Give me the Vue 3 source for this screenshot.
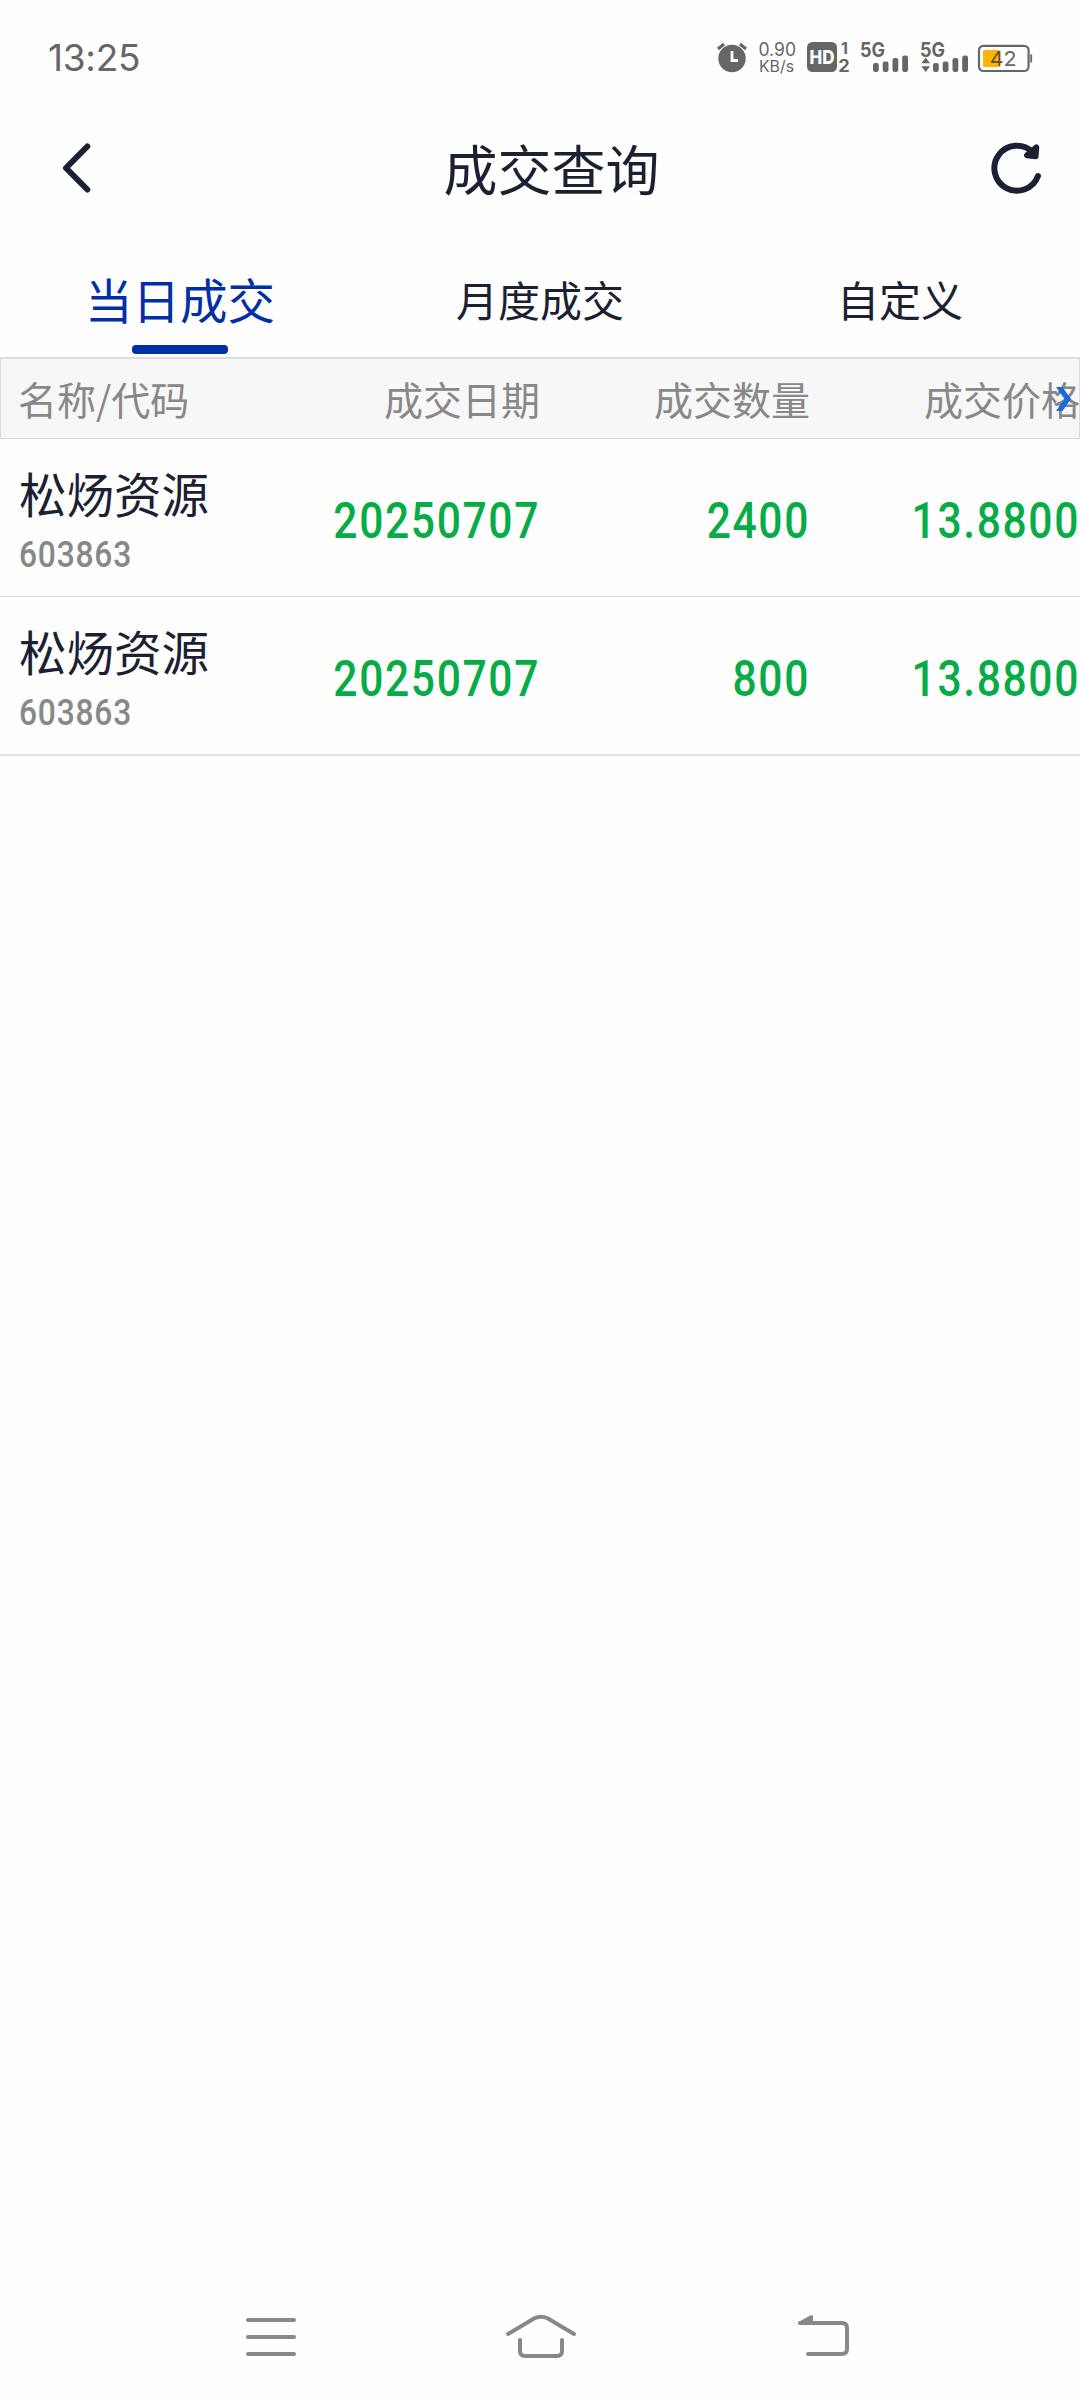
<template>
  <div class="page">
    <div class="status-bar">
      <span class="time">13:25</span>
      <div class="status-icons">
        <svg class="alarm" width="32" height="32" viewBox="716 41 32 32">
          <circle cx="732" cy="58.5" r="13.7" fill="#666" />
          <path d="M718 49l6-5M746 49l-6-5" stroke="#666" stroke-width="3.2" fill="none" />
          <path d="M732 51v9.5h6" stroke="#fefefe" stroke-width="2.8" fill="none" />
        </svg>
        <svg class="speed" width="40" height="32" viewBox="758 41 40 32">
          <text x="758.5" y="56" font-size="18" textLength="37.5" lengthAdjust="spacingAndGlyphs">0.90</text>
          <text x="759" y="71.5" font-size="15.5" textLength="35" lengthAdjust="spacingAndGlyphs">KB/s</text>
        </svg>
        <svg class="hd" width="44" height="32" viewBox="807 41 44 32">
          <rect x="807" y="42" width="30" height="30" rx="5.5" fill="#666" />
          <text class="hd-text" x="809.5" y="63.5" font-size="18.5" textLength="25" lengthAdjust="spacingAndGlyphs">HD</text>
          <text x="841" y="54" font-size="16" class="bold">1</text>
          <text x="838.3" y="71.5" font-size="17" class="bold" textLength="11.5" lengthAdjust="spacingAndGlyphs">2</text>
        </svg>
        <svg v-for="n in 2" :key="n" class="signal" width="50" height="32" viewBox="860 41 50 32">
          <text x="860" y="56.5" font-size="20" class="bold" textLength="25" lengthAdjust="spacingAndGlyphs">5G</text>
          <path v-if="n === 2" d="M865.7 57.5l4.4 5.7h-8.8zM865.7 72l4.4-5.7h-8.8z" fill="#666" />
          <rect
            v-for="bar in bars"
            :key="bar.x"
            :x="bar.x"
            :y="72 - bar.h"
            width="5.8"
            :height="bar.h"
            rx="2.2"
            fill="#666"
          />
        </svg>
        <svg class="battery" width="56" height="32" viewBox="977 41 56 32">
          <rect x="979" y="45.8" width="49.6" height="25.2" rx="4.5" fill="none" stroke="#666" stroke-width="2.2" />
          <rect x="983" y="50" width="17" height="17" rx="1.5" fill="#ffb400" />
          <path d="M1031.2 54.5v8" stroke="#666" stroke-width="1.8" />
          <text x="989.7" y="66" font-size="20.5" textLength="27" lengthAdjust="spacingAndGlyphs"><tspan fill="#665020">4</tspan>2</text>
        </svg>
      </div>
    </div>

    <div class="header">
      <svg class="back" width="32" height="52" viewBox="60 142 32 52">
        <path d="M87.3 146.5L66 168l21.3 21.5" />
      </svg>
      <h1 class="title">成交查询</h1>
      <svg class="refresh" width="54" height="54" viewBox="989 141 54 54">
        <path d="M1038 176A22.500 22.500 0 1 1 1032.500 152" />
        <path class="arrow" d="M1036.300 147.500l-.700 8.700-8.600-1z" />
      </svg>
    </div>

    <div class="tabs">
      <div
        v-for="(tab, i) in tabs"
        :key="tab"
        class="tab"
        :class="{ active: current === i }"
        @click="current = i"
      >
        <span>{{ tab }}</span>
      </div>
    </div>

    <div class="grid table-head">
      <span v-for="col in columns" :key="col">{{ col }}</span>
      <svg class="more" width="16" height="24" viewBox="0 0 16 24">
        <path d="M0 0h6.500l8.500 12-8.500 12H0l8.500-12z" />
      </svg>
    </div>

    <div class="table-body">
      <div v-for="(row, i) in rows" :key="i" class="grid row">
        <div class="stock">
          <div class="name">{{ row.name }}</div>
          <div class="code">{{ row.code }}</div>
        </div>
        <span class="num">{{ row.date }}</span>
        <span class="num">{{ row.amount }}</span>
        <span class="num">{{ row.price }}</span>
      </div>
    </div>

    <div class="nav-bar">
      <svg width="54" height="48" viewBox="244 2313 54 48">
        <path d="M248 2320h46M248 2337h46M248 2354h46" />
      </svg>
      <svg class="home" width="74" height="48" viewBox="504 2313 74 48">
        <path d="M508 2334L534.500 2318.300Q541 2315 547.500 2318.300L574 2334" />
        <path d="M520 2340v11q0 5 5 5h32q5 0 5-5v-11" />
      </svg>
      <svg width="54" height="48" viewBox="796 2313 54 48">
        <path d="M800 2323h42q5 0 5 5v21q0 5-5 5h-34" />
        <path class="solid" d="M799.500 2323l12-6.500v6.500z" />
      </svg>
    </div>
  </div>
</template>

<script setup>
import { ref } from 'vue'

const current = ref(0)
const tabs = ['当日成交', '月度成交', '自定义']
const columns = ['名称/代码', '成交日期', '成交数量', '成交价格']
const rows = ref([
  { name: '松炀资源', code: '603863', date: '20250707', amount: '2400', price: '13.8800' },
  { name: '松炀资源', code: '603863', date: '20250707', amount: '800', price: '13.8800' }
])

// 信号格
const bars = [
  { x: 873, h: 9 },
  { x: 882.7, h: 10.5 },
  { x: 892.5, h: 14 },
  { x: 902.2, h: 16.5 }
]
</script>

<style>
body {
  background: #fefefe;
}
</style>

<style scoped>
.page {
  display: flex;
  flex-direction: column;
  width: 1080px;
  height: 2400px;
  overflow: hidden;
  background: #fefefe;
  color: #1c2033;
  font-family: "Noto Sans CJK SC", sans-serif;
}
.page svg {
  display: block;
  flex: none;
  overflow: visible;
}
.status-bar,
.header,
.tabs,
.table-head,
.nav-bar {
  flex: none;
}
.status-bar {
  display: flex;
  justify-content: space-between;
  align-items: center;
  height: 114px;
  box-sizing: border-box;
  padding: 0 47px 0 48px;
  color: #666;
  font-family: Inter, sans-serif;
}
.time {
  padding-top: 2px;
  font-size: 37px;
  line-height: 40px;
  letter-spacing: -0.3px;
}
.status-icons {
  display: flex;
}
.status-icons text {
  fill: #666;
}
.status-icons .bold {
  font-weight: 700;
}
.status-icons .hd-text {
  fill: #fefefe;
  font-weight: 800;
}
.speed {
  margin-left: 10px;
}
.hd,
.signal {
  margin-left: 9px;
}
.signal + .signal {
  margin-left: 10px;
}
.battery {
  margin-left: 7px;
}
.header {
  display: flex;
  align-items: center;
  justify-content: space-between;
  height: 108px;
  padding: 0 37px 0 60px;
}
.title {
  margin: 0 0 0 22px;
  font-size: 54px;
  font-weight: 400;
  line-height: 80px;
}
.header path {
  fill: none;
  stroke: #1c2033;
  stroke-width: 6;
  stroke-linecap: round;
  stroke-linejoin: round;
}
.header .arrow {
  fill: #1c2033;
}
.tabs {
  display: flex;
  height: 135px;
}
.tab {
  display: flex;
  flex: 1;
  flex-direction: column;
  align-items: center;
  padding-top: 42px;
  font-size: 42px;
  line-height: 70px;
}
.tab.active {
  color: #002fa7;
  font-size: 47.5px;
}
.tab.active::after {
  content: "";
  width: 96px;
  height: 9px;
  margin-top: 11px;
  border-radius: 4px;
  background: #002fa7;
}
.grid {
  display: grid;
  grid-template-columns: repeat(4, 270px);
  align-items: center;
  text-align: right;
}
.table-head {
  position: relative;
  height: 82px;
  box-sizing: border-box;
  border: 1px solid #ddd;
  border-top-width: 2px;
  background: #f7f7f7;
  color: #888;
  font-size: 39px;
  line-height: 60px;
}
.table-head span {
  margin: -1px 1px 0 0;
}
.table-head span:first-child {
  padding-left: 17px;
  text-align: left;
}
/* 右侧还有更多列的提示箭头 */
.more {
  position: absolute;
  top: 28px;
  right: 7px;
}
.more path {
  fill: #1b6ad6;
}
.table-body {
  flex: 1;
}
.row {
  height: 158px;
  box-sizing: border-box;
  border-bottom: 1px solid #e1e1e1;
}
.row:last-child {
  height: 159px;
  border-bottom-width: 2px;
}
.stock {
  padding: 3px 0 0 19px;
  text-align: left;
}
.name {
  font-size: 47.5px;
  line-height: 66px;
}
.code {
  margin-top: 5px;
  color: #888;
  font-family: Roboto, sans-serif;
  font-size: 36.5px;
  font-weight: 500;
  line-height: 48px;
  letter-spacing: 0.9px;
  transform: scaleX(0.87);
  transform-origin: left;
}
.num {
  padding-top: 7px;
  color: #07ac46;
  font-family: Roboto, sans-serif;
  font-size: 49.5px;
  font-weight: 500;
  letter-spacing: 1.9px;
  transform: scaleX(0.86);
  transform-origin: right;
}
.nav-bar {
  display: flex;
  align-items: center;
  justify-content: space-between;
  height: 126px;
  padding: 0 230px 0 244px;
}
.home {
  margin-right: 12px;
}
.nav-bar path {
  fill: none;
  stroke: #888;
  stroke-width: 4;
  stroke-linecap: round;
  stroke-linejoin: round;
}
.nav-bar .solid {
  fill: #888;
  stroke-width: 3;
}
</style>
